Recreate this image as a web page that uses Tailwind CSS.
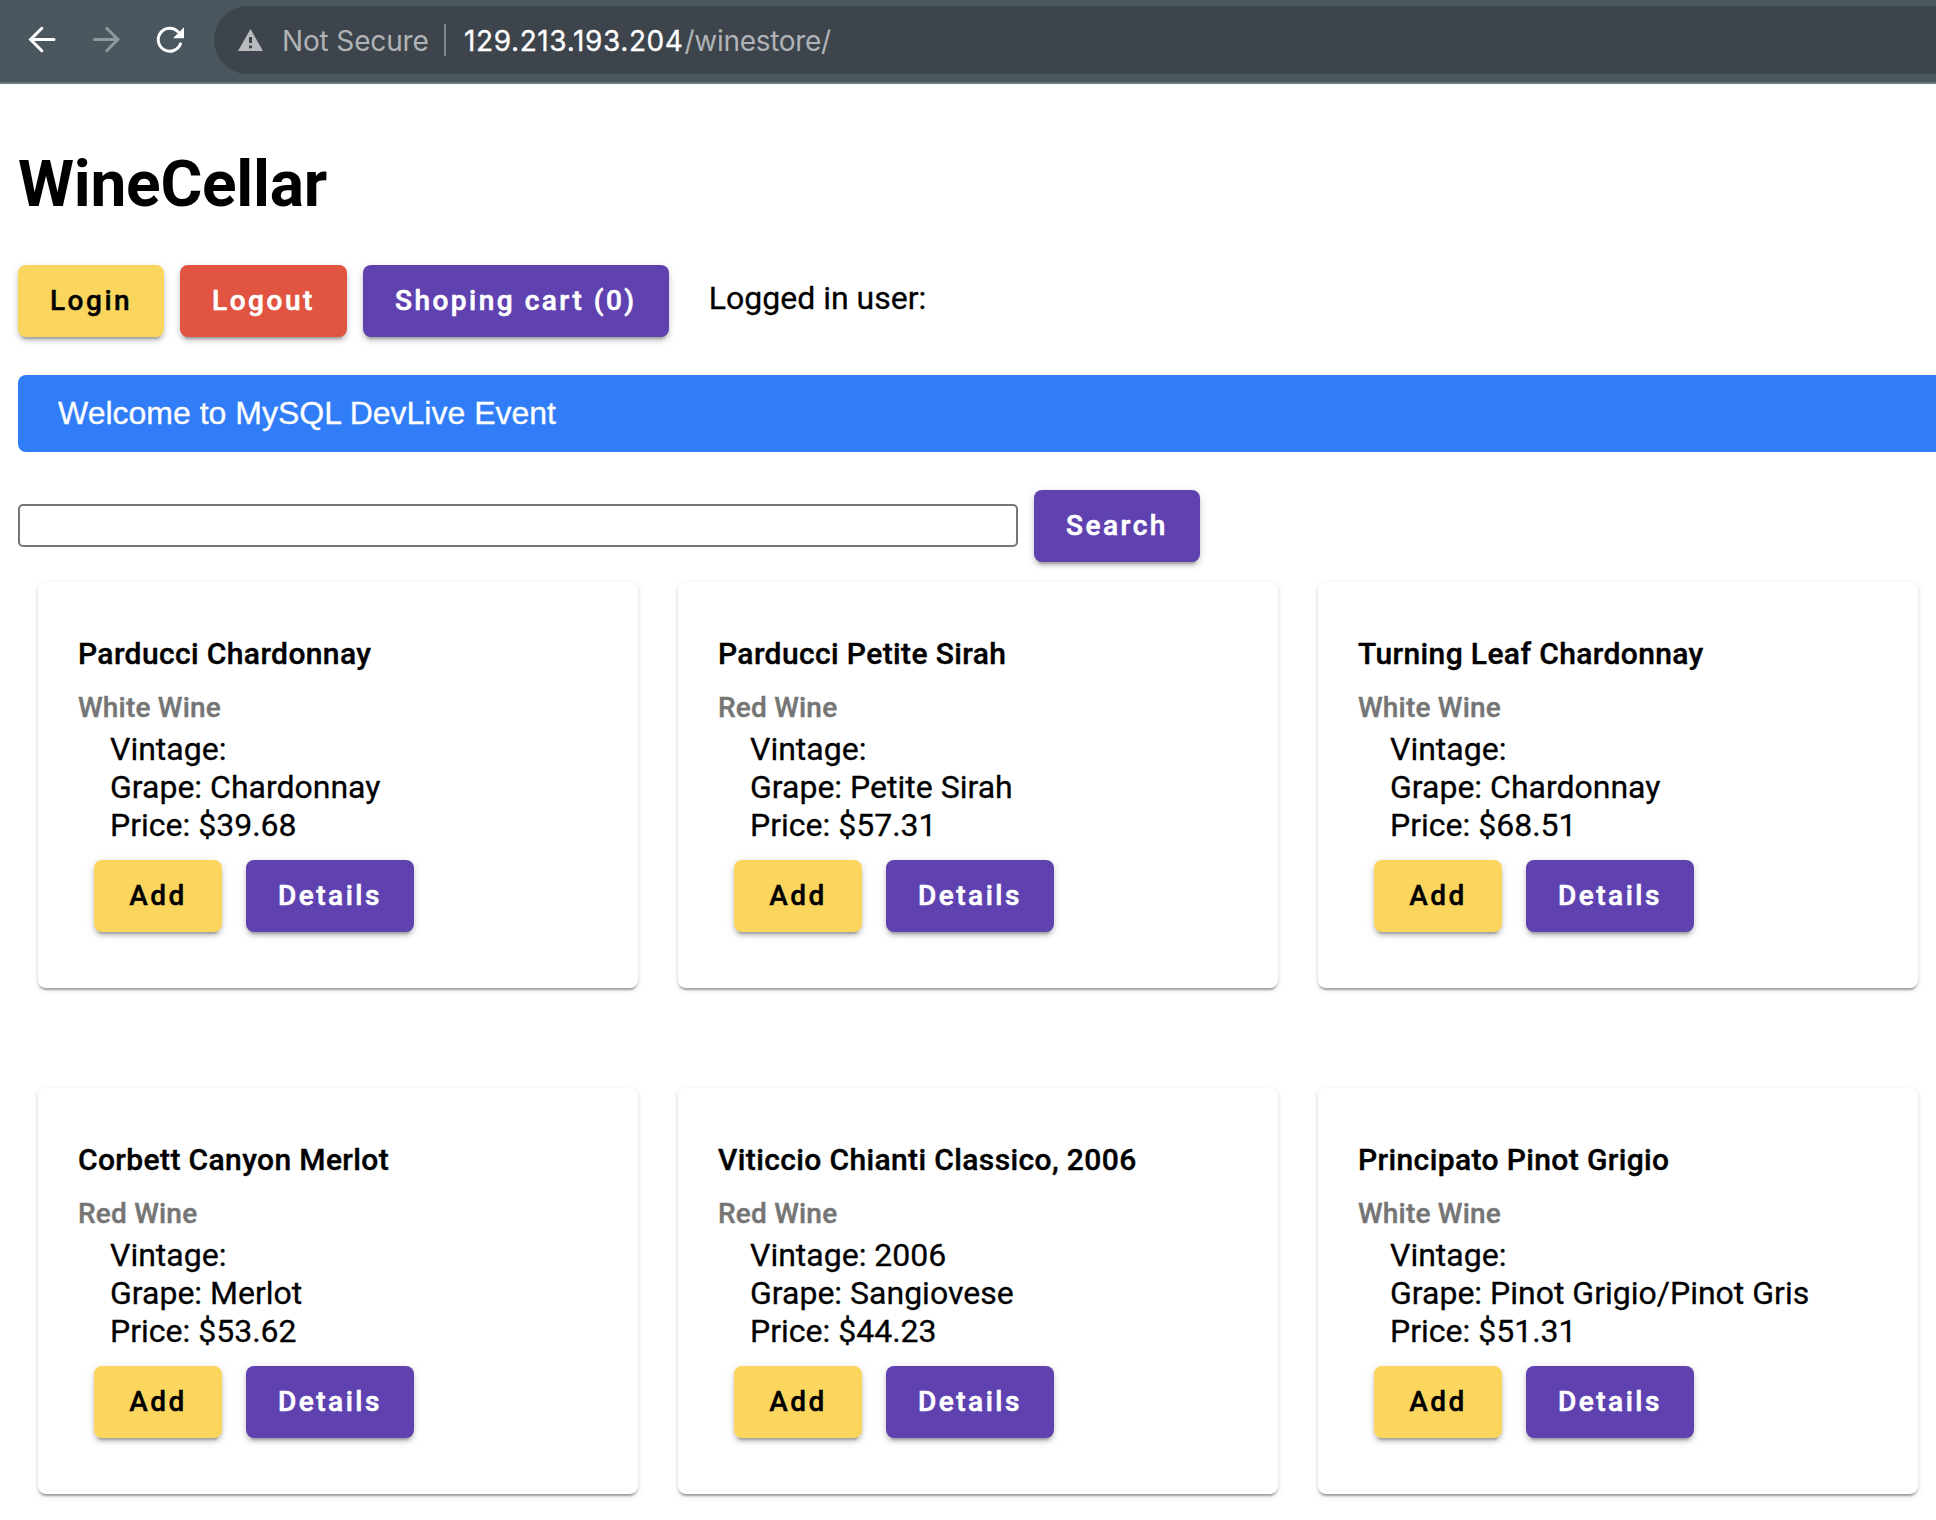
<!DOCTYPE html>
<html lang="en">
<head>
<meta charset="utf-8">
<title>WineCellar</title>
<script src="https://cdn.jsdelivr.net/npm/@tailwindcss/browser@4"></script>
</head>
<body class="bg-white text-black font-[Roboto,sans-serif] text-[32px] leading-[38px] w-[1936px] h-[1520px] overflow-hidden">
<header class="flex items-start h-[84px] bg-[#4a575f] border-b-2 border-[#6d7c84]">
  <svg class="w-[214px] h-[82px] shrink-0" viewBox="0 0 214 82" fill="none" stroke-width="3" stroke-linecap="round">
    <path stroke="#fff" d="M54 39.500H31M41.800 28.300L30.600 39.500L41.800 50.700"/>
    <path stroke="#8f989d" d="M94.500 39.500H117M106.700 28.300L117.900 39.500L106.700 50.700"/>
    <path stroke="#fff" d="M180.500 43.800A11.500 11.500 0 1 1 178 31.700"/>
    <path fill="#fff" d="M184 27.300V38.200H173Z"/>
  </svg>
  <div class="flex items-center flex-1 h-[68px] mt-[6px] pl-[24px] bg-[#3d444b] rounded-l-full font-[Inter,sans-serif] text-[28px] leading-[34px] text-[#b0b3b6] whitespace-nowrap">
    <svg class="w-[25px] h-[22px] shrink-0" viewBox="0 0 25 22"><path fill="#b8babd" fill-rule="evenodd" d="M12.500 0L25 22H0ZM11 8V14H14V8ZM11 16.500V19.300H14V16.500Z"/></svg>
    <span class="ml-[19px] w-[162px] pt-[2px] tracking-[-0.15px]">Not Secure</span>
    <span class="w-[2px] h-[32px] bg-[#80868b]"></span>
    <span class="ml-[18px] pt-[2px] text-white tracking-[0.62px] [-webkit-text-stroke:0.3px]">129.213.193.204</span><span class="pt-[2px] ml-[1px] tracking-[-0.3px]">/winestore/</span>
  </div>
</header>
<main class="pl-[18px]">
  <h1 class="mt-[63px] text-[64px] leading-[76px] font-bold tracking-[-0.25px]">WineCellar</h1>
  <div class="mt-[42px] flex gap-[16px] items-center">
    <button class="h-[72px] px-[32px] rounded-[8px] bg-[#fad65f] text-[28px] font-medium tracking-[2.5px] [-webkit-text-stroke:0.4px] shadow-[0_6px_2px_-4px_rgba(0,0,0,.2),0_4px_4px_rgba(0,0,0,.14),0_2px_10px_rgba(0,0,0,.12)]">Login</button>
    <button class="h-[72px] px-[32px] rounded-[8px] bg-[#e15441] text-white text-[28px] font-medium tracking-[2.5px] [-webkit-text-stroke:0.6px] shadow-[0_6px_2px_-4px_rgba(0,0,0,.2),0_4px_4px_rgba(0,0,0,.14),0_2px_10px_rgba(0,0,0,.12)]">Logout</button>
    <button class="w-[306px] h-[72px] px-[32px] whitespace-nowrap rounded-[8px] bg-[#5f41b0] text-white text-[28px] font-medium tracking-[2.5px] [-webkit-text-stroke:0.6px] shadow-[0_6px_2px_-4px_rgba(0,0,0,.2),0_4px_4px_rgba(0,0,0,.14),0_2px_10px_rgba(0,0,0,.12)]">Shoping cart (0)</button>
    <span class="ml-[24px] pb-[7px] [-webkit-text-stroke:0.3px]">Logged in user:</span>
  </div>
  <div class="mt-[38px] h-[77px] flex items-center rounded-l-[8px] bg-[#317df8] pl-[40px] pb-[2px] text-white font-['Liberation_Sans',sans-serif] [-webkit-text-stroke:0.3px]">Welcome to MySQL DevLive Event</div>
  <div class="mt-[38px] flex items-start gap-[16px]">
    <input type="text" aria-label="Search wines" class="mt-[14px] w-[1000px] h-[43px] border-2 border-[#767676] rounded-[5px] bg-white">
    <button class="h-[72px] px-[32px] rounded-[8px] bg-[#5f41b0] text-white text-[28px] font-medium tracking-[2.5px] [-webkit-text-stroke:0.6px] shadow-[0_6px_2px_-4px_rgba(0,0,0,.2),0_4px_4px_rgba(0,0,0,.14),0_2px_10px_rgba(0,0,0,.12)]">Search</button>
  </div>
  <section id="wines" class="mt-[20px] ml-[20px] grid grid-cols-[600px_600px_600px] gap-x-[40px] gap-y-[100px]"></section>
</main>
<template id="card">
  <article class="h-[406px] rounded-[8px] bg-white pl-[40px] pt-[52px] shadow-[0_4px_2px_-2px_rgba(0,0,0,.2),0_2px_2px_rgba(0,0,0,.14),0_2px_6px_rgba(0,0,0,.12)]">
    <h2 class="text-[30px] leading-[40px] font-medium tracking-[0.375px] [-webkit-text-stroke:0.4px]" data-f="name"></h2>
    <p class="mt-[17px] text-[28px] leading-[34px] font-medium tracking-[0.2px] text-[#757575] [-webkit-text-stroke:0.4px]" data-f="kind"></p>
    <p class="ml-[32px] mt-[5px] [-webkit-text-stroke:0.3px]" data-f="vintage"></p>
    <p class="ml-[32px] [-webkit-text-stroke:0.3px]" data-f="grape"></p>
    <p class="ml-[32px] [-webkit-text-stroke:0.3px]" data-f="price"></p>
    <div class="ml-[16px] mt-[16px] flex gap-[24px]">
      <button class="w-[128px] h-[72px] rounded-[8px] bg-[#fad65f] text-[28px] font-medium tracking-[2.5px] [-webkit-text-stroke:0.4px] shadow-[0_6px_2px_-4px_rgba(0,0,0,.2),0_4px_4px_rgba(0,0,0,.14),0_2px_10px_rgba(0,0,0,.12)]">Add</button>
      <button class="h-[72px] px-[32px] rounded-[8px] bg-[#5f41b0] text-white text-[28px] font-medium tracking-[2.5px] [-webkit-text-stroke:0.6px] shadow-[0_6px_2px_-4px_rgba(0,0,0,.2),0_4px_4px_rgba(0,0,0,.14),0_2px_10px_rgba(0,0,0,.12)]">Details</button>
    </div>
  </article>
</template>
<script>
const wines = [
  ["Parducci Chardonnay", "White Wine", "", "Chardonnay", "39.68"],
  ["Parducci Petite Sirah", "Red Wine", "", "Petite Sirah", "57.31"],
  ["Turning Leaf Chardonnay", "White Wine", "", "Chardonnay", "68.51"],
  ["Corbett Canyon Merlot", "Red Wine", "", "Merlot", "53.62"],
  ["Viticcio Chianti Classico, 2006", "Red Wine", "2006", "Sangiovese", "44.23"],
  ["Principato Pinot Grigio", "White Wine", "", "Pinot Grigio/Pinot Gris", "51.31"]
];
const tpl = document.getElementById("card"), list = document.getElementById("wines");
for (const [name, kind, vintage, grape, price] of wines) {
  const n = tpl.content.cloneNode(true);
  const v = { name, kind, vintage: "Vintage: " + vintage, grape: "Grape: " + grape, price: "Price: $" + price };
  for (const k in v) n.querySelector(`[data-f=${k}]`).textContent = v[k];
  list.append(n);
}
</script>
</body>
</html>
